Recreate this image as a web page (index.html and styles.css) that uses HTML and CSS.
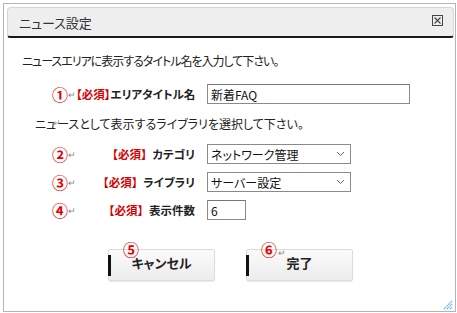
FILE: index.html
```html
<!DOCTYPE html>
<html lang="ja">
<head>
    <meta charset="UTF-8">
    <meta name="viewport" content="width=device-width, initial-scale=1.0">
    <title>ニュース設定</title>
    <link rel="stylesheet" href="styles.css">
</head>
<body>
    <div class="dialog">
        <div class="header">
            <span class="title">ニュース設定</span>
            <span class="close">
                <svg width="11" height="11" viewBox="0 0 11 11">
                    <rect x="0.5" y="0.5" width="10" height="10" fill="none" stroke="#444"/>
                    <path d="M2.5 2.5 L8.5 8.5 M8.5 2.5 L2.5 8.5" stroke="#444" stroke-width="1.1"/>
                </svg>
            </span>
        </div>

        <p class="lead">ニュースエリアに表示するタイトル名を入力して下さい。</p>

        <div class="field">
            <div class="head">
                <span class="num">①</span><span class="mark">↵</span>
                <span class="label"><span class="req">【必須】</span>エリアタイトル名</span>
            </div>
            <input type="text" class="text wide" value="新着FAQ">
        </div>

        <p class="sub">ニュ<span class="mark tight">↵</span>ースとして表示するライブラリを選択して下さい。</p>

        <div class="field">
            <div class="head">
                <span class="num">②</span><span class="mark">↵</span>
                <span class="label"><span class="req full">【必須】</span>カテゴリ</span>
            </div>
            <div class="select">
                <span>ネットワーク管理</span>
                <svg width="9" height="6" viewBox="0 0 9 6"><path d="M1 1 L4.5 4.5 L8 1" fill="none" stroke="#666"/></svg>
            </div>
        </div>

        <div class="field">
            <div class="head">
                <span class="num">③</span><span class="mark">↵</span>
                <span class="label"><span class="req full">【必須】</span>ライブラリ</span>
            </div>
            <div class="select">
                <span>サーバー設定</span>
                <svg width="9" height="6" viewBox="0 0 9 6"><path d="M1 1 L4.5 4.5 L8 1" fill="none" stroke="#666"/></svg>
            </div>
        </div>

        <div class="field">
            <div class="head">
                <span class="num">④</span><span class="mark">↵</span>
                <span class="label"><span class="req full">【必須】</span>表示件数</span>
            </div>
            <input type="text" class="text short" value="6">
        </div>

        <div class="buttons">
            <button class="btn"><span class="badge">⑤</span>キャンセル</button>
            <button class="btn"><span class="badge">⑥<span class="mark">↵</span></span>完了</button>
        </div>

        <svg class="grip" width="10" height="10" viewBox="0 0 10 10">
            <path d="M1 9 L9 1 M4 9 L9 4 M7 9 L9 7" stroke="#5aaee8" stroke-width="1.2" stroke-dasharray="1.4 0.6"/>
        </svg>
    </div>
</body>
</html>
```

FILE: styles.css
```css
body {
    margin: 0;
    background: #fff;
    font-family: "Noto Sans CJK JP", "Liberation Sans", sans-serif;
    font-size: 12px;
    color: #222;
    font-feature-settings: "palt";
}
.dialog {
    position: relative;
    box-sizing: border-box;
    margin: 3px 0 0 3px;
    width: 453px;
    height: 309px;
    border: 1px solid #b4b4b4;
    padding: 3px 1px 0 3px;
}
.header {
    display: flex;
    align-items: center;
    justify-content: space-between;
    background: #eeeeee;
    border: 1px solid #d6d6d6;
    border-bottom: 2px solid #1a1a1a;
    border-radius: 4px 4px 3px 3px;
    padding: 0 10px 0 11px;
    height: 28px;
}
.title {
    font-size: 13px;
    color: #333;
}
.close {
    display: flex;
    margin-top: -3px;
}
.lead {
    margin: 14px 0 0 15px;
    line-height: 18px;
    letter-spacing: -1px;
}
.sub {
    margin: 11px 0 0 28px;
    line-height: 18px;
}
.mark {
    color: #888;
    font-size: 9px;
}
.mark.tight {
    margin: 0 -4px 0 -3px;
    position: relative;
    top: -3px;
}
.field {
    display: flex;
    align-items: center;
    height: 20px;
    margin: 9px 0 0 45px;
}
.lead + .field {
    margin-top: 14px;
}
.field + .field {
    margin-top: 8px;
}
.head {
    display: flex;
    align-items: center;
    width: 143px;
    white-space: nowrap;
}
.num {
    color: #e60000;
    font-size: 16px;
    font-weight: bold;
    line-height: 1;
}
.label {
    margin-left: auto;
    font-size: 11.5px;
    font-weight: bold;
}
.req {
    color: #d40000;
}
.req.full {
    font-feature-settings: normal;
}
.text {
    box-sizing: border-box;
    height: 20px;
    margin-left: 12px;
    border: 1px solid #8a8a8a;
    border-top-color: #777;
    padding: 0 3px;
    font-family: inherit;
    font-size: 12px;
    color: #111;
    font-feature-settings: "palt";
}
.wide {
    width: 203px;
}
.short {
    width: 39px;
}
.select {
    box-sizing: border-box;
    display: flex;
    align-items: center;
    justify-content: space-between;
    width: 144px;
    height: 20px;
    margin-left: 12px;
    border: 1px solid #8a8a8a;
    padding: 0 5px 0 3px;
    color: #111;
}
.buttons {
    display: flex;
    gap: 31px;
    margin: 29px 0 0 101px;
}
.btn {
    position: relative;
    width: 107px;
    height: 32px;
    border: 1px solid #dcdcdc;
    border-radius: 2px;
    background: linear-gradient(#fbfbfb, #ececec);
    box-shadow: 0 1px 1px rgba(0, 0, 0, 0.08);
    font-family: inherit;
    font-size: 13px;
    font-weight: bold;
    color: #222;
    font-feature-settings: "palt";
    padding: 0 0 5px;
}
.btn::before {
    content: "";
    position: absolute;
    left: -1px;
    top: 5px;
    bottom: 4px;
    width: 3px;
    background: #111;
}
.badge {
    position: absolute;
    left: 14px;
    top: -8px;
    height: 14px;
    color: #e60000;
    font-size: 16px;
    line-height: 14px;
}
.badge .mark {
    margin-left: 1px;
    font-size: 9px;
    font-weight: normal;
}
.grip {
    position: absolute;
    right: 2px;
    bottom: 1px;
}
```
